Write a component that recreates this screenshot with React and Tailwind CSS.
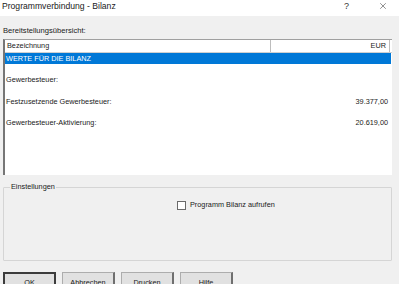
import { X } from 'lucide-react'

const font = { fontFamily: '"Liberation Sans", Arial, sans-serif' }

const rows = [
    { label: 'Gewerbesteuer:', value: '' },
    { label: 'Festzusetzende Gewerbesteuer:', value: '39.377,00' },
    { label: 'Gewerbesteuer-Aktivierung:', value: '20.619,00' }
]

export default function App() {
    return (
        <div className="w-[399px] h-[284px] overflow-hidden bg-[#f0f0f0] text-[#1a1a1a] font-['Liberation_Sans',Arial,sans-serif]">
            {/* title bar */}
            <div className="h-[16px] bg-white flex items-start relative">
                <span className="ml-[2px] mt-[1px] text-[8.6px] leading-[11px] text-[#1a1a1a]">Programmverbindung - Bilanz</span>
                <span className="absolute left-[344px] top-[1px] text-[9px] leading-[11px] text-[#333]">?</span>
                <X className="absolute left-[378px] top-[1px] w-[10px] h-[10px] text-[#333]" strokeWidth={1.3} />
            </div>

            <div className="px-[3px]">
                <div className="pt-[10px] h-[23px] text-[7.6px] leading-[10px]">Bereitstellungsübersicht:</div>

                {/* list view */}
                <div className="w-[389px] h-[136px] bg-white border-t border-t-[#a0a0a0] border-l-2 border-l-[#767676]">
                    <div className="flex h-[13px] border-b border-[#d0d0d0] text-[7.3px] leading-[12px]">
                        <div className="w-[266px] pl-[2px] border-r border-[#bdbdbd]">Bezeichnung</div>
                        <div className="w-[119px] pr-[3px] text-right border-r border-[#bdbdbd]">EUR</div>
                    </div>
                    <div className="w-[386px] h-[11px] bg-[#0078d7] text-white text-[7.3px] leading-[11px] pl-[1px]">WERTE FÜR DIE BILANZ</div>
                    <div className="flex flex-col">
                        {rows.map((r) => (
                            <div key={r.label} className="flex justify-between w-[383px] h-[11px] mt-[10.3px] text-[7.3px] leading-[11px] pl-[1px]">
                                <span>{r.label}</span>
                                <span>{r.value}</span>
                            </div>
                        ))}
                    </div>
                </div>

                {/* group box */}
                <div className="relative mt-[12px] w-[389px] h-[74px] border border-[#d5d5d5] rounded-[1px]">
                    <span className="absolute left-[6px] top-[-6px] px-[1px] bg-[#f0f0f0] text-[7.3px] leading-[10px]">Einstellungen</span>
                    <label className="absolute left-[173px] top-[12px] flex items-center gap-[4px] text-[7.3px] leading-[10px]">
                        <span className="w-[9px] h-[9px] bg-white border border-[#6a6a6a]"></span>
                        <span>Programm Bilanz aufrufen</span>
                    </label>
                </div>

                {/* buttons */}
                <div className="flex gap-[6px] mt-[11px] text-[7.3px]">
                    <Button label="OK" isDefault />
                    <Button label="Abbrechen" />
                    <Button label="Drucken" />
                    <Button label="Hilfe" />
                </div>
            </div>
        </div>
    )
}

function Button({ label, isDefault }) {
    return (
        <div
            style={font}
            className={`w-[53px] h-[22px] bg-[#e1e1e1] flex items-center justify-center pt-[1px] ${
                isDefault ? 'border-2 border-[#3c3c3c]' : 'border border-[#adadad] border-r-2 border-r-[#6f6f6f]'
            }`}
        >
            {label}
        </div>
    )
}
